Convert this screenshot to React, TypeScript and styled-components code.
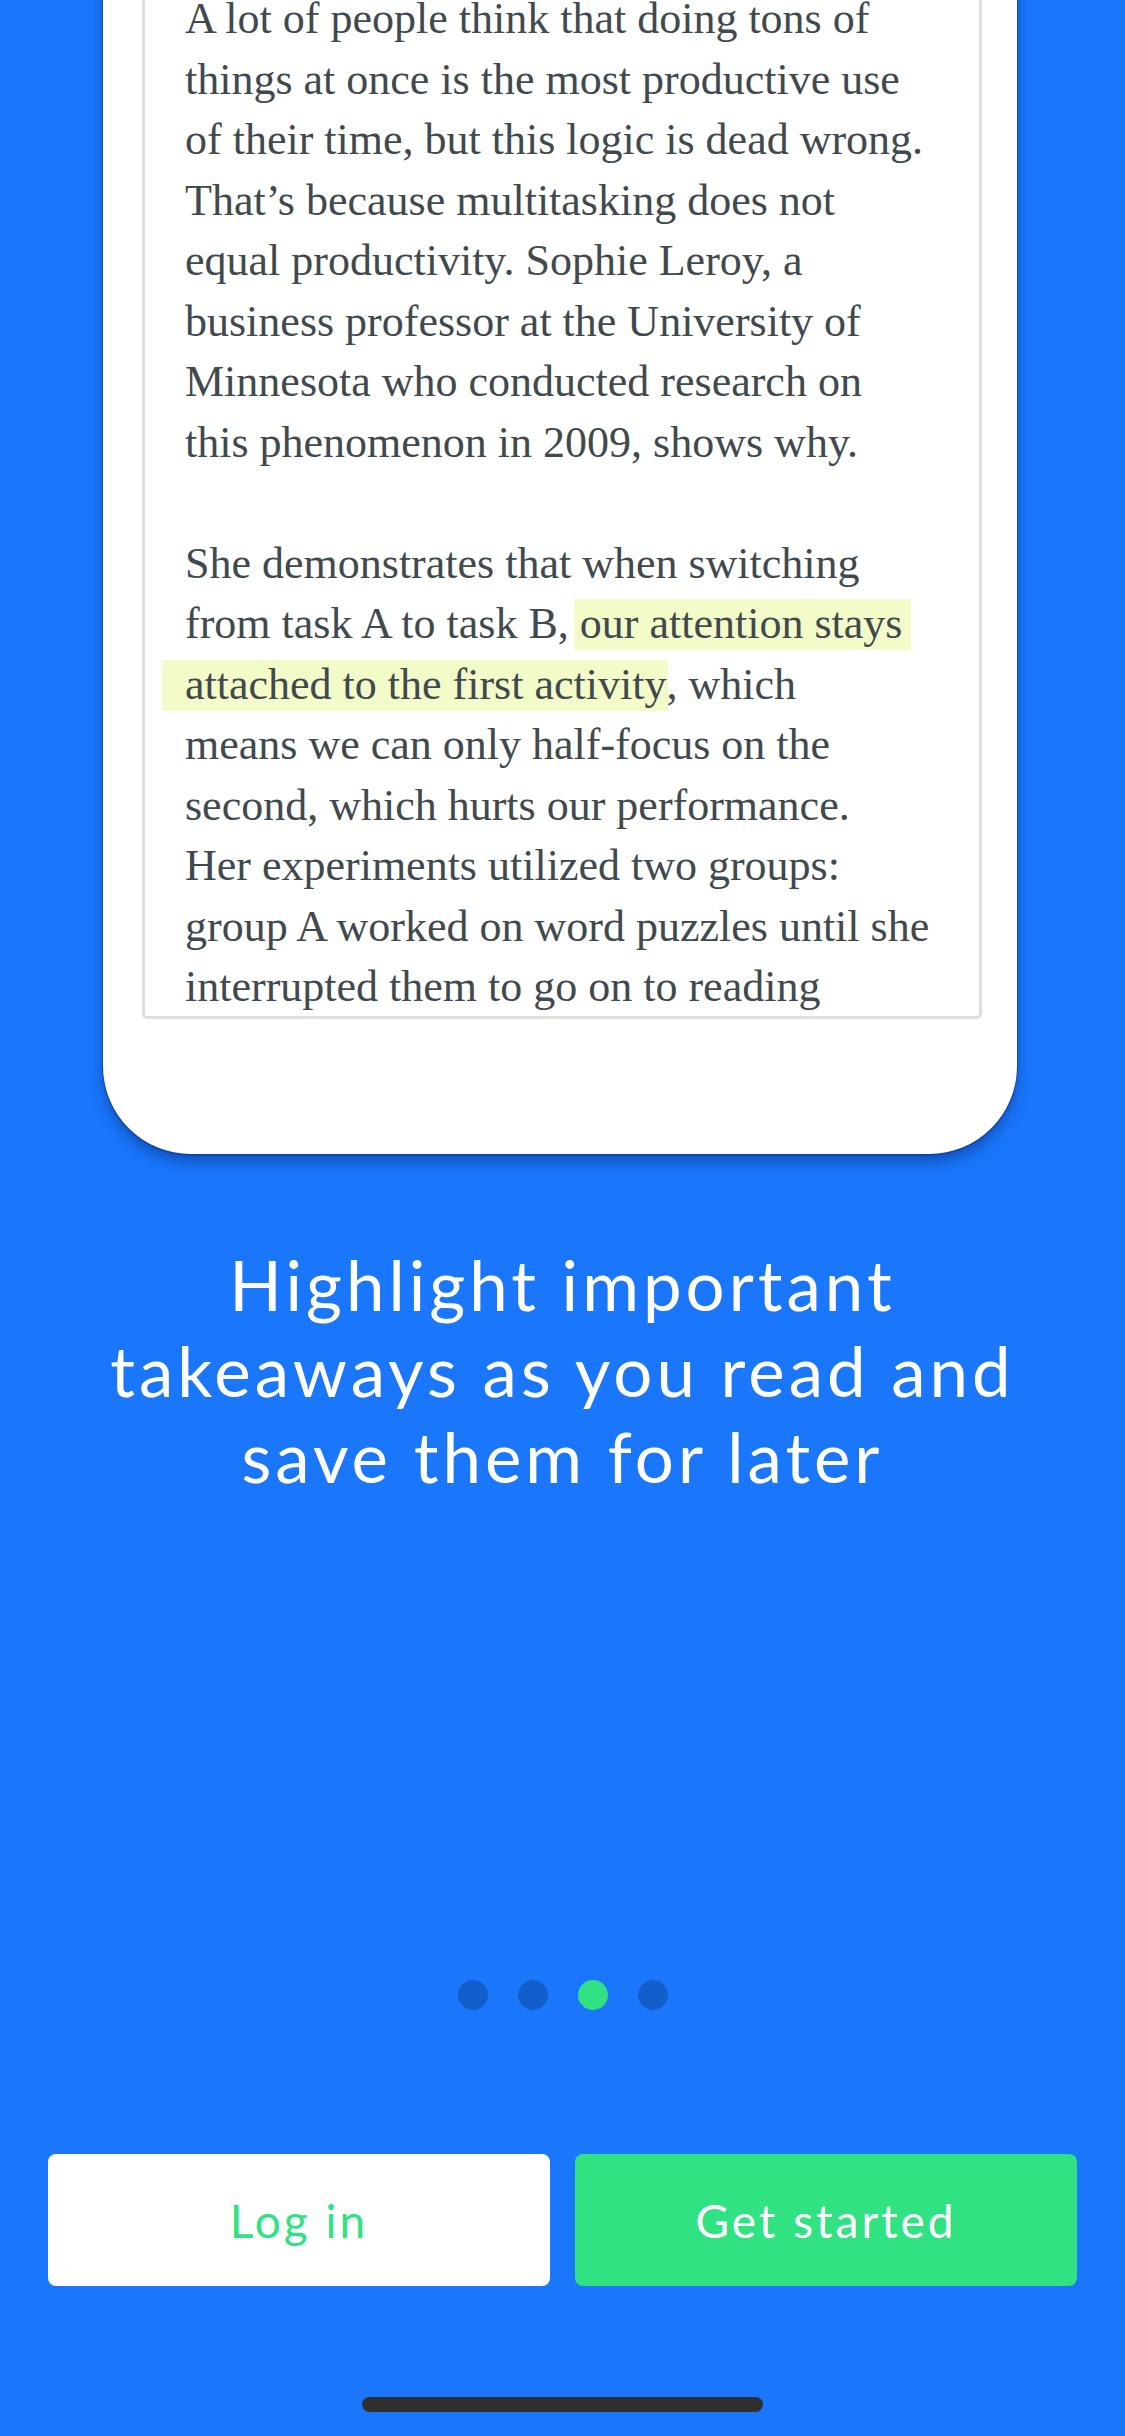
import React from "react";
import styled, { createGlobalStyle } from "styled-components";

const GlobalStyle = createGlobalStyle`
  html, body {
    margin: 0;
    padding: 0;
    background: #1a76fb;
  }
  #root {
    width: 1125px;
    height: 2436px;
  }
`;

const Page = styled.main`
  width: 1125px;
  height: 2436px;
  overflow: hidden;
  background: #1a76fb;
  display: flex;
  flex-direction: column;
`;

const Phone = styled.section`
  margin: -60px 0 0 103px;
  width: 914px;
  padding: 0 35px 135px 39px;
  box-sizing: border-box;
  background: #ffffff;
  border-radius: 0 0 88px 88px;
  box-shadow: 0 1px 0 1px rgba(10, 60, 150, 0.55), 0 8px 14px rgba(6, 40, 110, 0.45);
`;

const Screen = styled.div`
  height: 1079px;
  box-sizing: border-box;
  border: 3px solid #dedede;
  border-top: none;
  border-radius: 0 0 5px 5px;
  overflow: hidden;
  padding: 49px 0 0 40px;
  font-family: "Liberation Serif", "DejaVu Serif", serif;
  font-size: 44px;
  line-height: 60.5px;
  color: #3f494e;
`;

const Paragraph = styled.div`
  margin-bottom: 60.5px;
`;

const Line = styled.span`
  display: block;
  white-space: nowrap;
`;

const Mark = styled.span<{ $left: number; $right: number }>`
  background: #f3fbc9;
  padding: 0 ${(p) => p.$right}px 2px ${(p) => p.$left}px;
  margin: 0 ${(p) => -p.$right}px 0 ${(p) => -p.$left}px;
`;

const Heading = styled.h1`
  margin: 88px 0 0;
  font-family: Lato, "Open Sans", sans-serif;
  font-weight: 400;
  font-size: 69px;
  line-height: 86px;
  letter-spacing: 4px;
  color: #ffffff;
  text-align: center;
`;

const HeadingLine = styled.span`
  display: block;
`;

const Dots = styled.div`
  margin-top: 480px;
  display: flex;
  justify-content: center;
  gap: 30px;
`;

const Dot = styled.span<{ $active?: boolean }>`
  width: 30px;
  height: 30px;
  border-radius: 50%;
  background: ${(p) => (p.$active ? "#30e282" : "#125fcc")};
`;

const Actions = styled.div`
  margin-top: 144px;
  padding: 0 48px;
  display: grid;
  grid-template-columns: 1fr 1fr;
  gap: 25px;
`;

const Button = styled.button<{ $primary?: boolean }>`
  height: 132px;
  border: none;
  border-radius: 8px;
  background: ${(p) => (p.$primary ? "#30e282" : "#ffffff")};
  color: ${(p) => (p.$primary ? "#ffffff" : "#30e282")};
  font-family: Lato, "Open Sans", sans-serif;
  font-weight: 400;
  font-size: 46px;
  letter-spacing: 3px;
  cursor: pointer;
`;

const HomeIndicator = styled.div`
  margin: 111px auto 0;
  width: 401px;
  height: 15px;
  border-radius: 8px;
  background: #303030;
`;

const paragraph1 = [
  "A lot of people think that doing tons of",
  "things at once is the most productive use",
  "of their time, but this logic is dead wrong.",
  "That\u2019s because multitasking does not",
  "equal productivity. Sophie Leroy, a",
  "business professor at the University of",
  "Minnesota who conducted research on",
  "this phenomenon in 2009, shows why.",
];

const paragraph2Tail = [
  "means we can only half-focus on the",
  "second, which hurts our performance.",
  "Her experiments utilized two groups:",
  "group A worked on word puzzles until she",
  "interrupted them to go on to reading",
];

export default function App() {
  return (
    <>
      <GlobalStyle />
      <Page>
        <Phone>
          <Screen>
            <Paragraph>
              {paragraph1.map((l) => (
                <Line key={l}>{l}</Line>
              ))}
            </Paragraph>
            <Paragraph>
              <Line>She demonstrates that when switching</Line>
              <Line>
                from task A to task B, <Mark $left={6} $right={9}>our attention stays</Mark>
              </Line>
              <Line>
                <Mark $left={23} $right={2}>attached to the first activity</Mark>, which
              </Line>
              {paragraph2Tail.map((l) => (
                <Line key={l}>{l}</Line>
              ))}
            </Paragraph>
          </Screen>
        </Phone>
        <Heading>
          <HeadingLine>Highlight important</HeadingLine>
          <HeadingLine>takeaways as you read and</HeadingLine>
          <HeadingLine>save them for later</HeadingLine>
        </Heading>
        <Dots>
          <Dot />
          <Dot />
          <Dot $active />
          <Dot />
        </Dots>
        <Actions>
          <Button>Log in</Button>
          <Button $primary>Get started</Button>
        </Actions>
        <HomeIndicator />
      </Page>
    </>
  );
}
